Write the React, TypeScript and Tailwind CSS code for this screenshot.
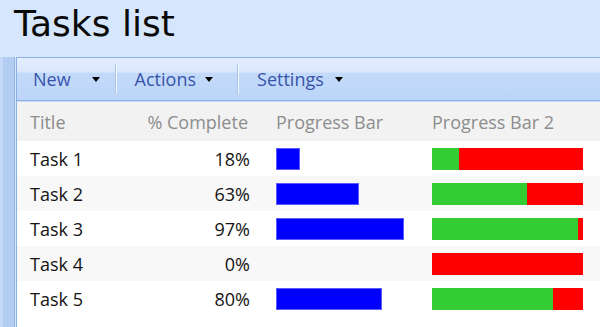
import React from "react";

const tasks = [
  { title: "Task 1", pct: 18 },
  { title: "Task 2", pct: 63 },
  { title: "Task 3", pct: 97 },
  { title: "Task 4", pct: 0 },
  { title: "Task 5", pct: 80 },
];

function Arrow() {
  return (
    <svg width="8" height="5" viewBox="0 0 8 5" className="shrink-0">
      <path d="M0 0 H8 L4 5 Z" fill="#000" />
    </svg>
  );
}

function Sep() {
  return (
    <div className="flex h-[30px] shrink-0">
      <div className="w-px bg-[#a9c5ec]" />
      <div className="w-px bg-[#f4f8fe]" />
    </div>
  );
}

export default function App() {
  return (
    <div
      className="w-[600px] h-[327px] overflow-hidden bg-[#d6e6fc] flex flex-col"
      style={{ fontFamily: '"Open Sans", "Noto Sans", sans-serif' }}
    >
      <div className="h-[57px] shrink-0 pl-[14px] pt-[3px]">
        <div
          className="text-[36px] leading-[42px] text-[#0a0a0a]"
          style={{ fontFamily: '"DejaVu Sans", sans-serif' }}
        >
          Tasks list
        </div>
      </div>
      <div className="flex flex-1 min-h-0">
        <div className="w-[16px] shrink-0 flex">
          <div className="w-[3px] bg-[#c3d9f7]" />
          <div className="w-[11px] bg-[#b2ccf2]" />
          <div className="w-px bg-[#93b5e6]" />
          <div className="w-px bg-[#d6e6fc]" />
        </div>
        <div className="flex-1 flex flex-col border-l border-[#8cb0e3] bg-white min-w-0">
          <div className="shrink-0 border-t border-[#8cb0e3] bg-[linear-gradient(#e3eefd_0px,#dbe8fc_14px,#c3dafa_15px,#bcd5f8_100%)] h-[43px] flex items-center text-[18px] leading-[24px] text-[#3753aa]">
            <span className="ml-[16px]">New</span>
            <span className="ml-[21px]"><Arrow /></span>
            <span className="ml-[15px]"><Sep /></span>
            <span className="ml-[18px]">Actions</span>
            <span className="ml-[9px]"><Arrow /></span>
            <span className="ml-[24px]"><Sep /></span>
            <span className="ml-[18px]">Settings</span>
            <span className="ml-[11px]"><Arrow /></span>
          </div>
          <div className="shrink-0 h-[2px] bg-[linear-gradient(#8cb0e3_0px,#8cb0e3_1px,#c7dbf6_1px)]" />
          <div className="text-[18px] leading-[24px]">
            <div className="grid grid-cols-[120px_113px_182px_1fr] h-[39px] items-center bg-[#f2f2f2] text-[#8d8d8d]">
              <div className="pl-[13px]">Title</div>
              <div className="text-right pr-[2px]">% Complete</div>
              <div className="pl-[26px]">Progress Bar</div>
              <div>Progress Bar 2</div>
            </div>
            {tasks.map((t, i) => (
              <div
                key={t.title}
                className={
                  "grid grid-cols-[120px_113px_182px_1fr] h-[35px] items-center text-[#141414] " +
                  (i % 2 === 1 ? "bg-[#f8f8f8]" : "bg-white")
                }
              >
                <div className="pl-[13px]">{t.title}</div>
                <div className="text-right">{t.pct}%</div>
                <div className="pl-[26px] flex">
                  {t.pct > 0 && (
                    <div
                      className="h-[22px] bg-[#0000ff] border border-[#5a5aff]"
                      style={{ width: Math.round((t.pct * 132) / 100) }}
                    />
                  )}
                </div>
                <div className="flex">
                  <div className="flex w-[151px] h-[22px]">
                    <div className="bg-[#33cc33]" style={{ width: `${t.pct}%` }} />
                    <div className="bg-[#ff0000] flex-1" />
                  </div>
                </div>
              </div>
            ))}
          </div>
        </div>
      </div>
    </div>
  );
}
